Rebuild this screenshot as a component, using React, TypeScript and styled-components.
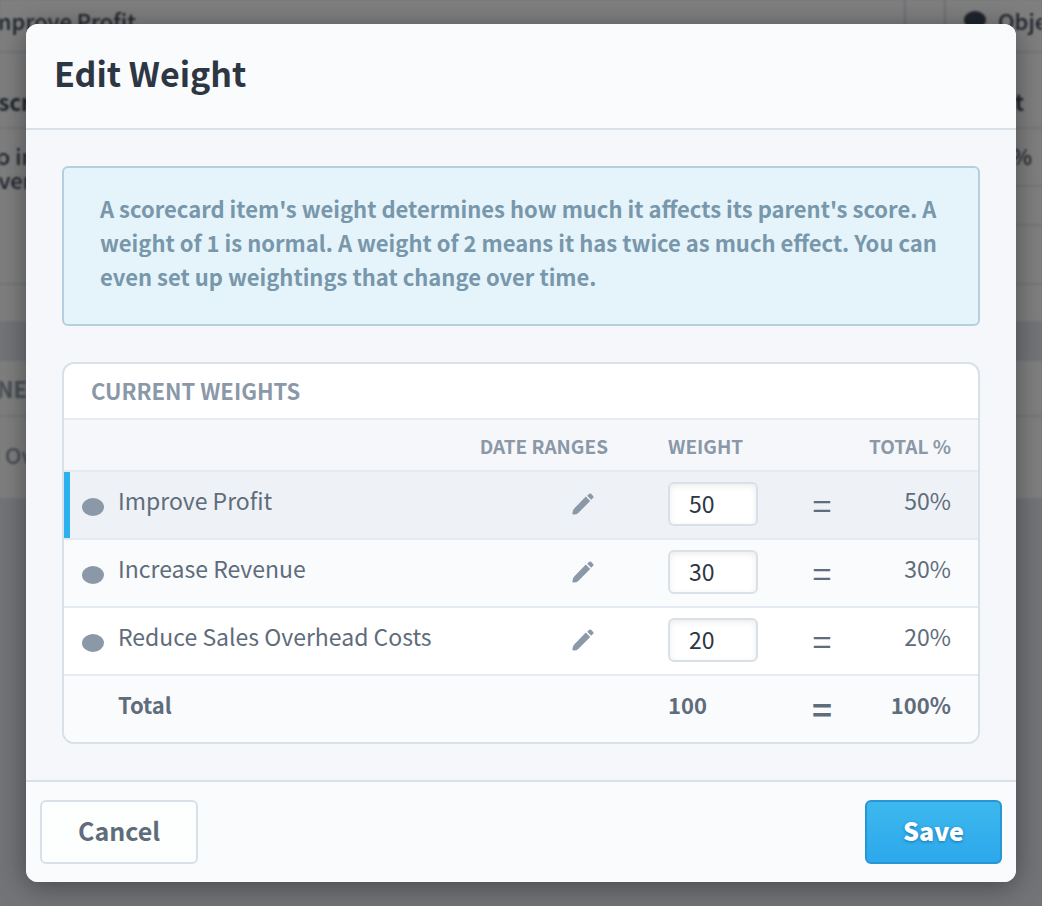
import React, { useState } from 'react';
import styled, { createGlobalStyle, css } from 'styled-components';

const GlobalStyle = createGlobalStyle`
  * { box-sizing: border-box; }
  body {
    margin: 0;
    background: #e4e9f0;
    font-family: "Noto Sans CJK SC", "Noto Sans", sans-serif;
    color: #5f6c7b;
  }
  button, input { font-family: inherit; }
`;

const Screen = styled.div`
  position: relative;
  min-height: 100vh;
  overflow: hidden;
`;

const Scorecard = styled.div`
  position: absolute;
  inset: 0;
  filter: blur(1px);
  background: #e4e9f0;
`;

const Section = styled.div`
  display: flex;
  gap: 38px;
  margin-bottom: 40px;
  background: #fff;
`;

const Panel = styled.section<{ $side?: boolean }>`
  flex: ${p => (p.$side ? '0 0 98px' : '1 1 0')};
  min-width: 0;
  overflow: hidden;
  white-space: nowrap;
  border: 0 solid #d8e0e8;
  border-width: ${p => (p.$side ? '0 0 0 2px' : '0 2px 0 0')};
`;

const PanelRow = styled.div<{ $h: number; $top?: number; $bold?: boolean; $muted?: boolean; $pull?: number }>`
  display: flex;
  align-items: flex-start;
  gap: 12px;
  height: ${p => p.$h}px;
  padding-top: ${p => p.$top ?? 0}px;
  padding-left: 18px;
  border-bottom: 2px solid #e5ebf2;
  font-size: 22px;
  line-height: 24px;
  font-weight: ${p => (p.$bold ? 700 : 500)};
  color: ${p => (p.$muted ? '#8a98a7' : '#3f4a58')};
  &:last-child { border-bottom: 0; }
  & > span { margin-left: ${p => -(p.$pull ?? 0)}px; }
`;

const Dot = styled.i<{ $dark?: boolean }>`
  display: inline-block;
  flex: none;
  width: 22px;
  height: 18px;
  margin-top: ${p => (p.$dark ? 3 : 14)}px;
  border-radius: 50%;
  background: ${p => (p.$dark ? '#3f4a58' : '#8a98a7')};
`;

const Backdrop = styled.div`
  position: absolute;
  inset: 0;
  background: rgba(0, 0, 0, 0.5);
`;

const Dialog = styled.section`
  position: relative;
  margin: 24px 26px;
  border-radius: 12px;
  overflow: hidden;
  background: #f5f7fb;
  box-shadow: 0 4px 28px rgba(0, 0, 0, 0.4);
`;

const Header = styled.header`
  padding: 22px 28px 28px;
  background: #fafbfd;
  border-bottom: 2px solid #d8e0e8;
`;

const Title = styled.h2`
  margin: 0;
  font-size: 34px;
  line-height: 54px;
  font-weight: 700;
  color: #2d3643;
`;

const Body = styled.div`
  padding: 36px;
`;

const Info = styled.p`
  margin: 0 0 36px;
  padding: 23px 36px 31px;
  border: 2px solid #b5cfdd;
  border-radius: 6px;
  background: #e5f3fb;
  color: #7897aa;
  font-size: 22px;
  line-height: 34px;
  font-weight: 700;
`;

const Card = styled.div`
  border: 2px solid #d8e0e8;
  border-radius: 12px;
  overflow: hidden;
  background: #fff;
`;

const CardTitle = styled.h3`
  margin: 0;
  padding: 0 27px 2px;
  font-size: 22px;
  line-height: 52px;
  font-weight: 700;
  color: #8a98a7;
`;

const Table = styled.table`
  width: 100%;
  border-collapse: separate;
  border-spacing: 0;
  table-layout: fixed;
`;

const ItemCol = styled.col``;
const RangeCol = styled.col`width: 192px;`;
const WeightCol = styled.col`width: 126px;`;
const EqualsCol = styled.col`width: 56px;`;
const TotalCol = styled.col`width: 128px;`;

const Th = styled.th<{ $align?: string; $inset?: number }>`
  height: 52px;
  padding: 2px ${p => p.$inset ?? 27}px 0 0;
  border-top: 2px solid #e5ebf2;
  background: #f5f7fb;
  font-size: 19px;
  line-height: 28px;
  font-weight: 700;
  text-align: ${p => p.$align ?? 'left'};
  white-space: nowrap;
  color: #8a98a7;
`;

const Row = styled.tr<{ $tone: string; $active?: boolean }>`
  background: ${p => p.$tone};
  ${p => p.$active && css`
    & > td:first-child { box-shadow: inset 6px 0 #2cb0ee; }
  `}
`;

const Td = styled.td<{ $align?: string; $bold?: boolean }>`
  height: 68px;
  padding: 0 27px 10px 0;
  border-top: 2px solid #e5ebf2;
  font-size: ${p => (p.$bold ? 22 : 23)}px;
  line-height: 34px;
  font-weight: ${p => (p.$bold ? 700 : 400)};
  text-align: ${p => p.$align ?? 'left'};
  vertical-align: middle;
  white-space: nowrap;
`;

const NameCell = styled(Td)`
  padding-left: 18px;
  padding-right: 0;
`;

const Name = styled.span<{ $indent?: boolean }>`
  display: flex;
  align-items: center;
  gap: 14px;
  padding-left: ${p => (p.$indent ? 36 : 0)}px;
`;

const RangeCell = styled(Td)`
  padding-right: 74px;
`;

const EditButton = styled.button`
  display: inline-flex;
  padding: 0;
  border: 0;
  background: none;
  color: #8a98a7;
  vertical-align: middle;
`;

const EqualsCell = styled(Td)`
  padding: 0;
  font-size: 34px;
`;

const WeightCell = styled(Td)`
  padding: 0 0 2px;
`;

const WeightInput = styled.input`
  display: block;
  width: 90px;
  height: 44px;
  padding: 0 18px 2px 19px;
  border: 2px solid #d8e0e8;
  border-radius: 6px;
  background: #fff;
  box-shadow: inset 0 2px 6px rgba(0, 0, 0, 0.08);
  font-size: 23px;
  color: #2d3643;
`;

const Footer = styled.footer`
  display: flex;
  justify-content: space-between;
  padding: 18px 14px;
  background: #fafbfd;
  border-top: 2px solid #d8e0e8;
`;

const Button = styled.button<{ $primary?: boolean }>`
  height: 64px;
  padding: 0 36px 4px;
  border: 2px solid #d8e0e8;
  border-radius: 6px;
  background: #fdfefe;
  font-size: 25px;
  line-height: 36px;
  font-weight: 700;
  color: #5f6c7b;
  ${p => p.$primary && css`
    border-color: #2896d2;
    background: linear-gradient(#3db8ee, #2ca8ec);
    color: #fff;
    font-weight: 900;
    text-shadow: 0 1px 3px rgba(0, 60, 110, 0.5);
  `}
`;

const Pencil = () => (
  <svg width="22" height="22" viewBox="0 0 22 22" fill="currentColor" aria-hidden="true">
    <path d="M13.8 3.6 18.2 8 6 20.2Q4.6 21.4 1.8 21.6 .2 21.8.4 20.2.8 17.2 2 15.8Z" />
    <path d="M15.2 2.8 17.2.8Q18.1 0 19 .8L21.2 3Q22 3.9 21.2 4.8L19.2 6.8Z" />
  </svg>
);

const items = [
  { name: 'Improve Profit', weight: 50, tone: '#eef1f6' },
  { name: 'Increase Revenue', weight: 30, tone: '#fafbfd' },
  { name: 'Reduce Sales Overhead Costs', weight: 20, tone: '#ffffff' },
];

export default function App() {
  const [weights, setWeights] = useState(items.map(i => String(i.weight)));
  const total = weights.reduce((sum, w) => sum + (Number(w) || 0), 0);
  const percent = (w: string) => `${total ? Math.round(((Number(w) || 0) / total) * 100) : 0}%`;

  return (
    <Screen>
      <GlobalStyle />
      <Scorecard aria-hidden="true">
        <Section>
          <Panel>
            <PanelRow $h={53} $top={8} $pull={34}><span>Improve Profit</span></PanelRow>
            <PanelRow $h={76} $top={36} $bold $pull={48}><span>Descr</span></PanelRow>
            <PanelRow $h={156} $top={14} $pull={33}><span>To in<br />over</span></PanelRow>
            <PanelRow $h={36} />
          </Panel>
          <Panel $side>
            <PanelRow $h={53} $top={8}><Dot $dark /><span>Obje</span></PanelRow>
            <PanelRow $h={76} $top={36} $bold $pull={16}><span>Weight</span></PanelRow>
            <PanelRow $h={58} $top={14} $pull={-10}><span>100%</span></PanelRow>
            <PanelRow $h={39} />
            <PanelRow $h={59} />
            <PanelRow $h={36} />
          </Panel>
        </Section>
        <Section>
          <Panel>
            <PanelRow $h={56} $top={15} $muted $bold $pull={58}><span>OWNE</span></PanelRow>
            <PanelRow $h={81} $top={25} $muted $pull={13}><span>Ov</span></PanelRow>
          </Panel>
          <Panel $side>
            <PanelRow $h={56} />
            <PanelRow $h={81} />
          </Panel>
        </Section>
      </Scorecard>
      <Backdrop />
      <Dialog role="dialog" aria-labelledby="dialog-title">
        <Header>
          <Title id="dialog-title">Edit Weight</Title>
        </Header>
        <Body>
          <Info>
            A scorecard item's weight determines how much it affects its parent's score. A weight of 1 is
            normal. A weight of 2 means it has twice as much effect. You can even set up weightings that
            change over time.
          </Info>
          <Card>
            <CardTitle>CURRENT WEIGHTS</CardTitle>
            <Table>
              <colgroup>
                <ItemCol />
                <RangeCol />
                <WeightCol />
                <EqualsCol />
                <TotalCol />
              </colgroup>
              <thead>
                <tr>
                  <Th aria-label="Item" />
                  <Th $align="right" $inset={60}>DATE RANGES</Th>
                  <Th>WEIGHT</Th>
                  <Th aria-label="Equals" />
                  <Th $align="right">TOTAL %</Th>
                </tr>
              </thead>
              <tbody>
                {items.map((item, i) => (
                  <Row key={item.name} $tone={item.tone} $active={i === 0}>
                    <NameCell>
                      <Name><Dot />{item.name}</Name>
                    </NameCell>
                    <RangeCell $align="right">
                      <EditButton type="button" aria-label={`Edit date ranges for ${item.name}`}>
                        <Pencil />
                      </EditButton>
                    </RangeCell>
                    <WeightCell>
                      <WeightInput
                        aria-label={`Weight of ${item.name}`}
                        value={weights[i]}
                        onChange={e => setWeights(weights.map((w, n) => (n === i ? e.target.value : w)))}
                      />
                    </WeightCell>
                    <EqualsCell $align="center">=</EqualsCell>
                    <Td $align="right">{percent(weights[i])}</Td>
                  </Row>
                ))}
                <Row $tone="#fafbfd">
                  <NameCell $bold><Name $indent>Total</Name></NameCell>
                  <RangeCell />
                  <Td $bold>{total}</Td>
                  <EqualsCell $align="center" $bold>=</EqualsCell>
                  <Td $bold $align="right">100%</Td>
                </Row>
              </tbody>
            </Table>
          </Card>
        </Body>
        <Footer>
          <Button type="button">Cancel</Button>
          <Button type="button" $primary>Save</Button>
        </Footer>
      </Dialog>
    </Screen>
  );
}
